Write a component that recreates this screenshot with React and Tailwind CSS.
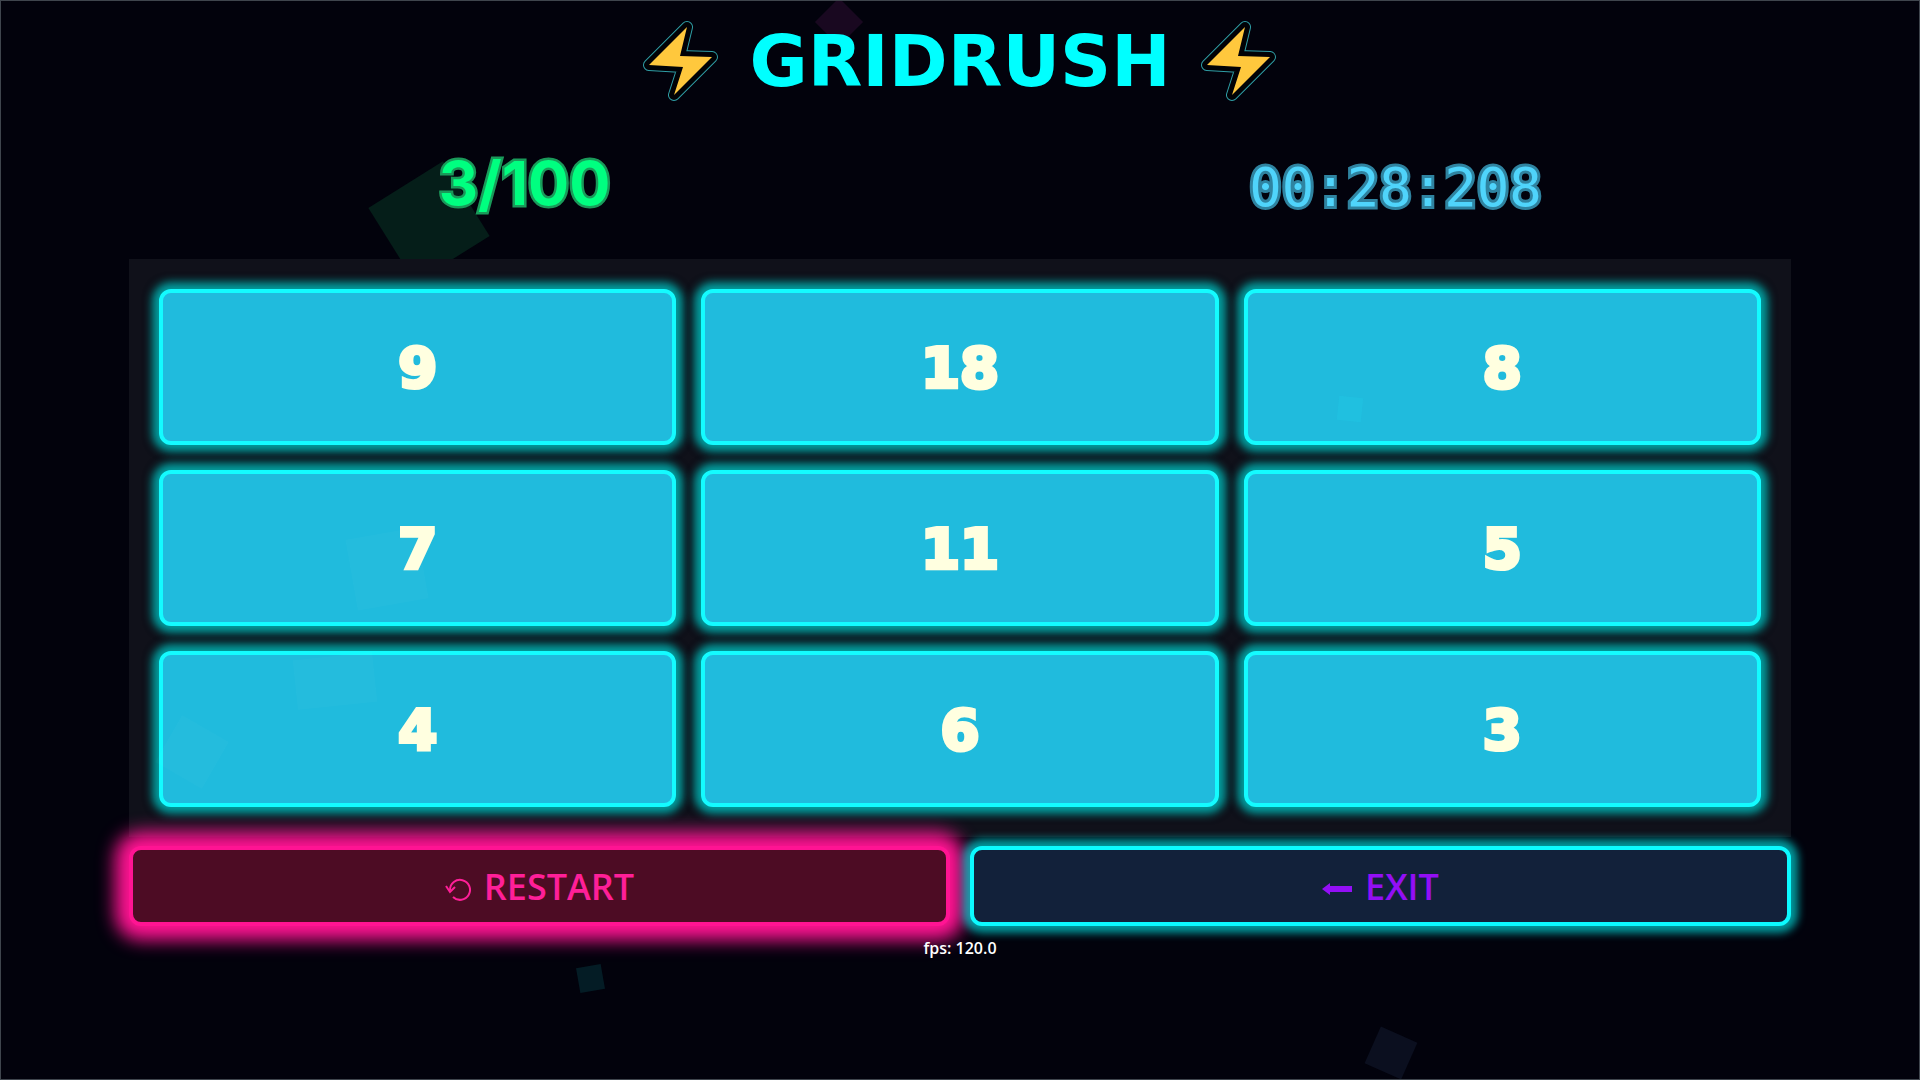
import React from 'react';

const tiles = [9, 18, 8, 7, 11, 5, 4, 6, 3];

const Bolt = () => (
  <svg width="76" height="82" viewBox="0 0 76 82" aria-hidden="true" className="flex-shrink-0">
    <g strokeLinejoin="round">
      <path d="M44 6 L37 35 L69 36 L31 74 L40 46 L6 44 Z" fill="none" stroke="#2f9ea6" strokeWidth="12" />
      <path d="M44 6 L37 35 L69 36 L31 74 L40 46 L6 44 Z" fill="#000" stroke="#010206" strokeWidth="10" />
      <path d="M44 6 L37 35 L69 36 L31 74 L40 46 L6 44 Z" fill="#ffc83d" />
    </g>
  </svg>
);

const RestartIcon = () => (
  <svg width="26" height="24" viewBox="0 0 26 24" fill="none" stroke="currentColor" strokeWidth="2" aria-hidden="true" className="mt-1">
    <path d="M5 13 A10 10 0 1 1 8 20" />
    <path d="M1 9 L5 15 L10 10" />
  </svg>
);

const ArrowIcon = () => (
  <svg width="30" height="14" viewBox="0 0 30 14" fill="currentColor" aria-hidden="true" className="mt-1">
    <path d="M0 7 L8 1 L8 4 L30 4 L30 10 L8 10 L8 13 Z" />
  </svg>
);

const Backdrop = () => (
  <div className="absolute inset-0 overflow-hidden pointer-events-none" aria-hidden="true">
    <div className="absolute left-[384px] top-[177px] w-[88px] h-[88px] -rotate-32 bg-[#051e19]" />
    <div className="absolute left-[821px] top-[4px] w-[34px] h-[34px] rotate-45 bg-[#190820]" />
    <div className="absolute left-[577px] top-[965px] w-[25px] h-[25px] -rotate-10 bg-[#041c25]" />
    <div className="absolute left-[1370px] top-[1032px] w-[40px] h-[40px] rotate-24 bg-[#0b0f1f]" />
  </div>
);

// squares that show faintly through the tiles
const Foreground = () => (
  <div className="absolute inset-0 overflow-hidden pointer-events-none" aria-hidden="true">
    <div className="absolute left-[1337px] top-[396px] w-6 h-6 rotate-6 bg-[#22d8f0]/20" />
    <div className="absolute left-[350px] top-[532px] w-[72px] h-[72px] -rotate-10 bg-white/2" />
    <div className="absolute left-[294px] top-[655px] w-[80px] h-[50px] -rotate-6 bg-white/2" />
    <div className="absolute left-[164px] top-[724px] w-[54px] h-[54px] rotate-30 bg-white/2" />
  </div>
);

const App = () => {
  return (
    <div className="relative min-h-screen overflow-hidden border border-[#3f454d] bg-[#02020c] font-['Open_Sans','Noto_Sans',sans-serif]">
      <Backdrop />

      <main className="relative px-32">
        <header className="flex items-center justify-center gap-[30px] pt-5">
          <Bolt />
          <h1 className="font-['DejaVu_Sans',sans-serif] font-bold text-[71px] leading-[82px] text-[#00ffff]">GRIDRUSH</h1>
          <Bolt />
        </header>

        <div className="-mx-10 mt-[50px] grid grid-cols-2 text-center">
          <div className="font-[Inter,sans-serif] font-bold text-[61px] leading-[60px] text-[#00ff80] [-webkit-text-stroke:5px_#1a9a5a] [paint-order:stroke_fill]">
            3/100
          </div>
          <div className="font-['DejaVu_Sans_Mono',monospace] text-[54px] leading-[70px] text-[#4fd4fb] [-webkit-text-stroke:6px_#2f83a0] [paint-order:stroke_fill]">
            00:28:208
          </div>
        </div>

        <div className="mt-9 grid grid-cols-3 gap-[25px] bg-[#10111a] p-[30px]">
          {tiles.map((n) => (
            <button
              key={n}
              className="flex h-[156px] items-center justify-center rounded-xl border-4 border-[#14fbff] bg-[#20bbdd] pt-0.5 font-['DejaVu_Sans',sans-serif] font-bold text-[56px] text-[#ffffe0] [-webkit-text-stroke:4px_#ffffe0] shadow-[0_0_8px_7px_rgba(0,255,255,0.6),0_0_8px_8px_rgba(0,0,0,0.5)]"
            >
              {n}
            </button>
          ))}
        </div>

        <div className="mt-[9px] grid grid-cols-2 gap-5 text-[36px] font-semibold">
          <button className="flex h-20 items-center justify-center gap-[13px] rounded-xl border-4 border-[#ff1493] bg-[#4d0c24] pt-0.5 text-[#ff1f98] shadow-[0_0_18px_14px_#ff1493]">
            <RestartIcon />
            <span>RESTART</span>
          </button>
          <button className="relative flex h-20 items-center justify-center gap-[13px] rounded-xl border-4 border-[#0cfaff] bg-[#12213a] pt-0.5 text-[#930ff5] shadow-[0_0_8px_7px_rgba(0,255,255,0.6)]">
            <ArrowIcon />
            <span>EXIT</span>
          </button>
        </div>

        <p className="relative mt-[10px] text-center text-base font-semibold text-white">fps: 120.0</p>
      </main>

      <Foreground />
    </div>
  );
};

export default App;
